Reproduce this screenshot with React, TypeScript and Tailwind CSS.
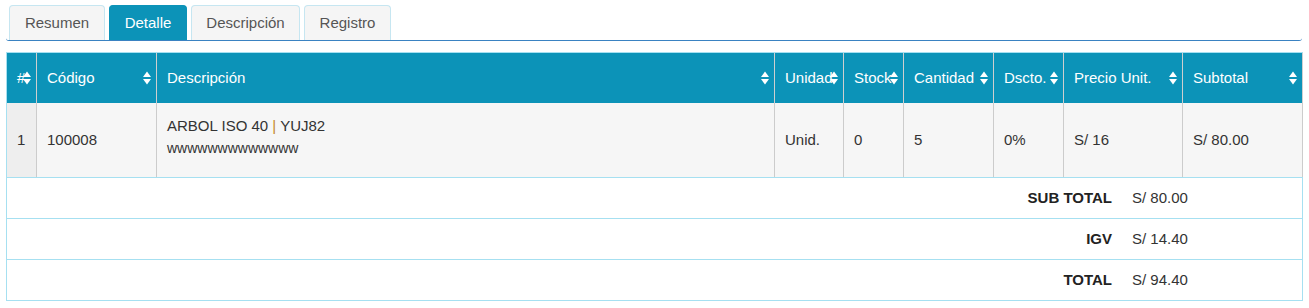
const cols = "grid grid-cols-[30px_120px_618px_69px_60px_90px_70px_119px_121px]"

const headers = ["#", "Código", "Descripción", "Unidad", "Stock", "Cantidad", "Dscto.", "Precio Unit.", "Subtotal"]

const tabs = [
    { label: "Resumen", w: "w-[96px]" },
    { label: "Detalle", w: "w-[78px]" },
    { label: "Descripción", w: "w-[109px]" },
    { label: "Registro", w: "w-[87px]" },
]

function SortIcon() {
    return (
        <svg width="8" height="14" viewBox="0 0 8 14" className="absolute right-[5px] top-1/2 -translate-y-1/2">
            <polygon points="0,6 4,0.5 8,6" fill="white" />
            <polygon points="0,8 4,13.5 8,8" fill="white" />
        </svg>
    )
}

function Totals({ label, value }: { label: string; value: string }) {
    return (
        <div className="flex h-[41px] items-center border-x border-b border-[#a6e0f1] bg-white">
            <div className="flex-1 text-right pr-[10px] font-bold text-[#222]">{label}</div>
            <div className="w-[180px] pl-[10px] text-[#333]">{value}</div>
        </div>
    )
}

export default function App() {
    const row = ["1", "100008", "", "Unid.", "0", "5", "0%", "S/ 16", "S/ 80.00"]

    return (
        <div className="w-[1309px] h-[308px] bg-white pt-[5px] text-[15px] text-[#333]" style={{ fontFamily: '"Liberation Sans", Arial, sans-serif' }}>
            <div className="ml-[6px] w-[1296px] flex items-end pl-[3px] gap-[4px] border-b border-[#3a82c2] rounded-b-[3px]">
                {tabs.map((t, i) => (
                    <div key={t.label} className={`${t.w} h-[35px] flex items-center justify-center rounded-t-[4px] border border-b-0 ${i === 1 ? "bg-[#0c93b8] border-[#0c93b8] text-white" : "bg-[#f5f5f5] border-[#c6e6f1] text-[#555]"}`}>
                        {t.label}
                    </div>
                ))}
            </div>

            <div className="ml-[6px] w-[1297px] mt-[11px]">
                <div className={`${cols} h-[51px] bg-[#0c93b8] text-white border-t border-[#a6e0f1]`}>
                    {headers.map((h, i) => (
                        <div key={h} className={`relative flex items-center pl-[10px] whitespace-nowrap overflow-hidden border-l ${i === 0 ? "border-[#a6e0f1]" : "border-[#cfcfcf]"} ${i === 8 ? "border-r border-r-[#cfcfcf]" : ""}`}>
                            {h}
                            <SortIcon />
                        </div>
                    ))}
                </div>
                <div className={`${cols} h-[75px] border-b border-[#a6e0f1]`}>
                    {row.map((c, i) => (
                        <div key={i} className={`flex items-center pl-[10px] border-l ${i === 0 ? "bg-[#eeeeee] border-[#a6e0f1]" : "bg-[#f6f6f6] border-[#cccccc]"} ${i === 8 ? "border-r border-r-[#cccccc]" : ""}`}>
                            {i === 2 ? (
                                <div className="flex flex-col pb-[7px]">
                                    <div className="leading-[22px]">ARBOL ISO 40 <span className="text-[#c4862c]">|</span> YUJ82</div>
                                    <div className="leading-[22px] text-[14px]">wwwwwwwwwwwww</div>
                                </div>
                            ) : c}
                        </div>
                    ))}
                </div>
                <Totals label="SUB TOTAL" value="S/ 80.00" />
                <Totals label="IGV" value="S/ 14.40" />
                <Totals label="TOTAL" value="S/ 94.40" />
            </div>
        </div>
    )
}
